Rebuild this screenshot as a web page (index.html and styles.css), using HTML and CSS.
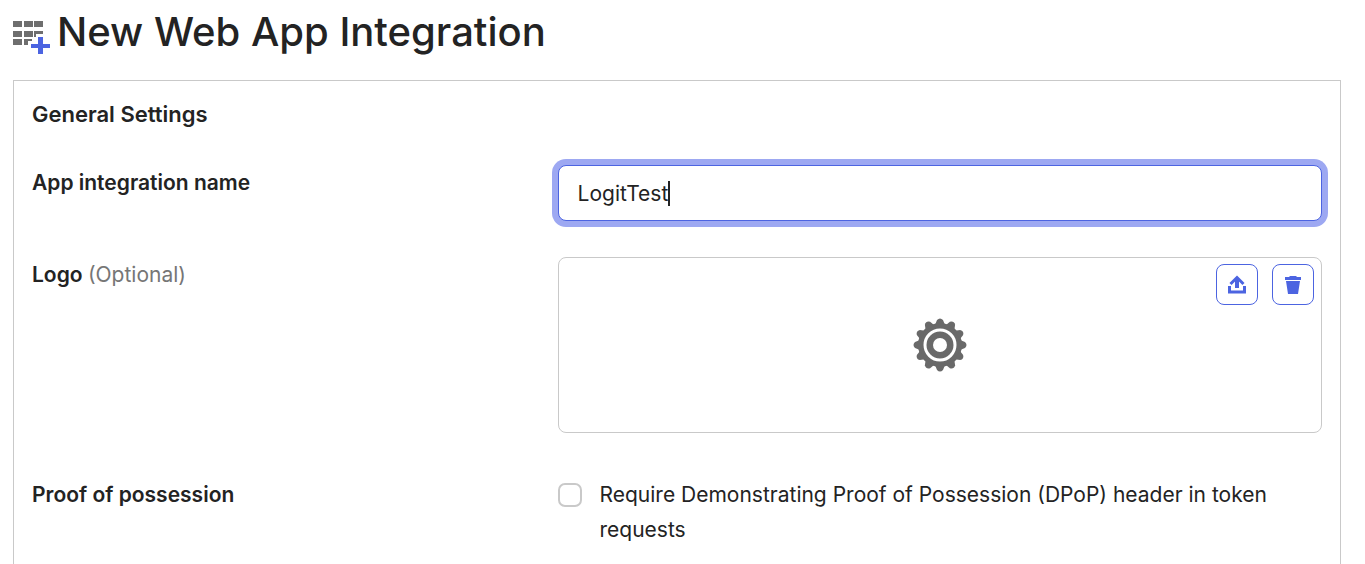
FILE: index.html
```html
<!DOCTYPE html>
<html lang="en">
<head>
<meta charset="utf-8">
<meta name="viewport" content="width=device-width, initial-scale=1">
<title>New Web App Integration</title>
<link rel="stylesheet" href="styles.css">
</head>
<body>
<header class="page-header">
  <svg class="app-icon" viewBox="0 0 38 34" aria-hidden="true">
    <path fill="#6e6e6e" d="M0 1h9v6H0zM11 1h9v6h-9zM21 1h9v6h-9zM0 11h9v6H0zM11 11h9v6h-9zM21 11h9v3h-7v3h-2zM0 19h9v6H0zM11 19h8v2h-4v4h-4z"/>
    <path fill="#4c64e1" d="M25 17h5v7h7v4h-7v6h-5v-6h-7v-4h7z"/>
  </svg>
  <h1 class="page-title">New Web App Integration</h1>
</header>
<main class="panel">
  <h2 class="panel-title">General Settings</h2>
  <form class="form">
    <div class="row row-name">
      <label class="label" for="app-name">App integration name</label>
      <div class="name-field">
        <input class="text-input" id="app-name" type="text" value="LogitTest">
        <span class="caret"></span>
      </div>
    </div>
    <div class="row row-logo">
      <div class="label" id="logo-label">Logo <span class="optional">(Optional)</span></div>
      <div class="logo-box" role="group" aria-labelledby="logo-label">
        <svg class="gear" viewBox="-27 -27 54 54" aria-hidden="true">
          <g fill="#696969">
            <circle r="22"/>
            <g id="teeth">
              <path id="tooth" d="M-5-20L-3-25Q0-28 3-25L5-20z"/>
              <use href="#tooth" transform="rotate(30)"/>
              <use href="#tooth" transform="rotate(60)"/>
            </g>
            <use href="#teeth" transform="rotate(90)"/>
            <use href="#teeth" transform="rotate(180)"/>
            <use href="#teeth" transform="rotate(270)"/>
          </g>
          <circle r="15" fill="none" stroke="#fff" stroke-width="3"/>
          <circle r="7" fill="#fff"/>
        </svg>
        <div class="logo-actions">
          <button class="icon-button" type="button" aria-label="Upload logo">
            <svg class="button-icon" viewBox="0 0 20 20" aria-hidden="true">
              <path fill="none" stroke="#4c64e1" stroke-width="3" d="M2.500 11v6h15v-6"/>
              <path fill="none" stroke="#4c64e1" stroke-width="4" d="M10 13V3"/>
              <path fill="none" stroke="#4c64e1" stroke-width="3" d="M3.500 9L10 2.500 16.500 9"/>
            </svg>
          </button>
          <button class="icon-button" type="button" aria-label="Delete logo">
            <svg class="button-icon" viewBox="0 0 20 20" aria-hidden="true">
              <path fill="#4c64e1" d="M2 2h4l1-1h6l1 1h4v3H2zM3 6h14l-2 13H5z"/>
            </svg>
          </button>
        </div>
      </div>
    </div>
    <div class="row">
      <div class="label">Proof of possession</div>
      <div class="check-field">
        <input class="checkbox" id="dpop" type="checkbox">
        <label class="check-label" for="dpop">Require Demonstrating Proof of Possession (DPoP) header in token requests</label>
      </div>
    </div>
  </form>
</main>
</body>
</html>
```
FILE: styles.css
```css
* {
  box-sizing: border-box;
}

body {
  display: flex;
  flex-direction: column;
  min-height: 100vh;
  margin: 0;
  padding: 8px 24px 0 13px;
  background: #fff;
  color: #232323;
  font-family: Inter, "Liberation Sans", sans-serif;
  font-size: 21px;
  line-height: 35px;
}

.page-header {
  display: flex;
  align-items: center;
  gap: 6px;
  height: 48px;
  margin-bottom: 24px;
}

.app-icon {
  width: 38px;
  height: 34px;
  margin-top: 10px;
}

.page-title {
  margin: 0;
  font-size: 40px;
  font-weight: 500;
  line-height: 48px;
}

.panel {
  flex: 1;
  padding: 16px 18px 0;
  border: 1px solid #c9c9c9;
  border-bottom: 0;
}

.panel-title {
  margin: 0 0 33px;
  font-size: 22px;
  font-weight: 600;
  line-height: 35px;
}

.row {
  display: grid;
  grid-template-columns: 11fr 16fr;
  align-items: start;
}

.row-name {
  margin-bottom: 36px;
}

.row-logo {
  margin-bottom: 44px;
}

.label {
  font-weight: 600;
}

.optional {
  color: #767676;
  font-weight: 400;
}

.name-field {
  position: relative;
}

.text-input {
  display: block;
  width: 100%;
  height: 56px;
  padding: 0 19px;
  border: 1px solid #4c64e1;
  border-radius: 8px;
  outline: 0;
  box-shadow: 0 0 0 6px #9da8f2;
  color: inherit;
  font: inherit;
}

.caret {
  position: absolute;
  top: 16px;
  left: 110px;
  width: 2px;
  height: 25px;
  background: #232323;
}

.logo-box {
  position: relative;
  display: flex;
  align-items: center;
  justify-content: center;
  height: 176px;
  border: 1px solid #c9c9c9;
  border-radius: 8px;
}

.gear {
  width: 54px;
  height: 54px;
}

.logo-actions {
  position: absolute;
  top: 6px;
  right: 7px;
  display: flex;
  gap: 14px;
}

.icon-button {
  display: flex;
  align-items: center;
  justify-content: center;
  width: 42px;
  height: 41px;
  padding: 0;
  border: 1px solid #4c64e1;
  border-radius: 8px;
  background: #fff;
}

.button-icon {
  width: 20px;
  height: 20px;
}

.check-field {
  display: grid;
  grid-template-columns: 24px 1fr;
  gap: 18px;
}

.checkbox {
  width: 24px;
  height: 24px;
  margin: 6px 0 0;
  border: 2px solid #c9c9c9;
  border-radius: 7px;
  background: #fff;
  appearance: none;
}
```
